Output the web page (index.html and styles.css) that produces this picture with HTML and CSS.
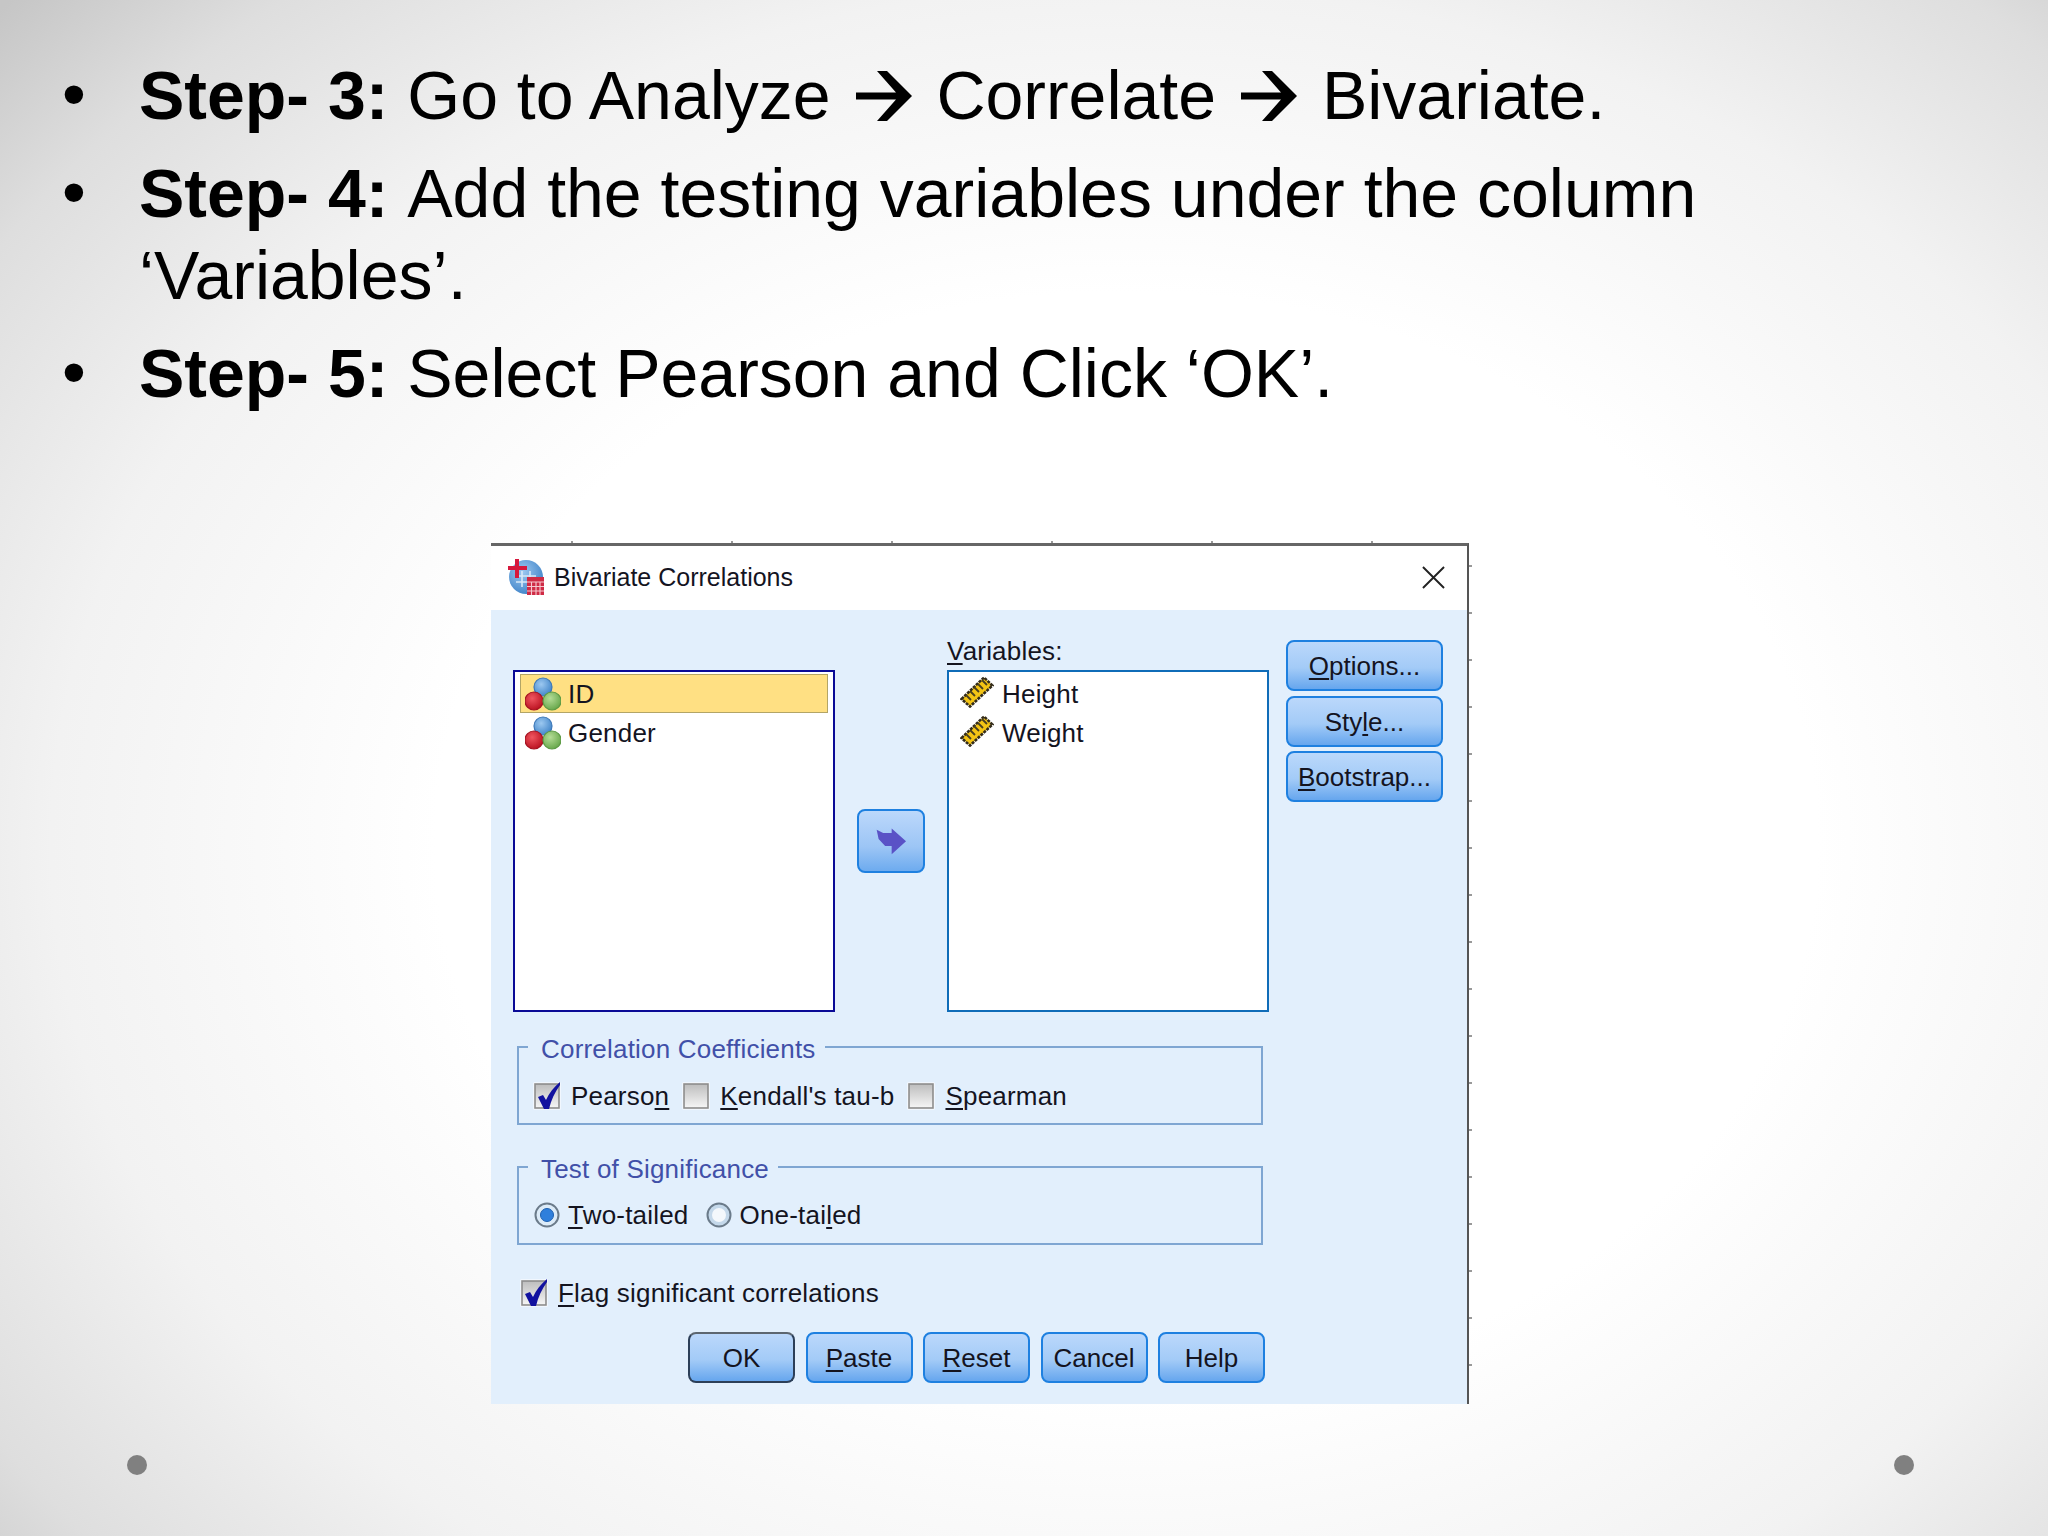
FILE: index.html
```html
<!DOCTYPE html>
<html lang="en">
<head>
<meta charset="utf-8">
<title>Bivariate Correlations</title>
<link rel="stylesheet" href="styles.css">
</head>
<body>
<svg class="defs" aria-hidden="true">
  <defs>
    <radialGradient id="gb" cx=".4" cy=".35" r=".7"><stop offset="0" stop-color="#9cc8f0"/><stop offset="1" stop-color="#3f83c8"/></radialGradient>
    <radialGradient id="gr" cx=".4" cy=".35" r=".7"><stop offset="0" stop-color="#f0555f"/><stop offset="1" stop-color="#b80f1e"/></radialGradient>
    <radialGradient id="gg" cx=".4" cy=".35" r=".7"><stop offset="0" stop-color="#b4dc96"/><stop offset="1" stop-color="#64a548"/></radialGradient>
    <linearGradient id="gc" x1="0" y1="0" x2="0" y2="1"><stop offset="0" stop-color="#bdbdbd"/><stop offset="1" stop-color="#f6f6f6"/></linearGradient>
    <symbol id="nominal" viewBox="0 0 36 34">
      <circle cx="18" cy="10" r="9" fill="url(#gb)" stroke="#3d78b8" stroke-width="1.2"/>
      <circle cx="9" cy="24" r="9" fill="url(#gr)" stroke="#a51220" stroke-width="1.2"/>
      <circle cx="27" cy="24" r="9" fill="url(#gg)" stroke="#5c9a44" stroke-width="1.2"/>
    </symbol>
    <symbol id="ruler" viewBox="0 0 34 32">
      <path d="M1.500 23 24 1.500l8.500 8L10 30.500z" fill="#f4c414" stroke="#332c1c" stroke-width="2.600" stroke-dasharray="3 1"/>
      <path d="M6 19l5 5M10 15l5 5M14 11l5 5M18 8l5 5M22 4l5 5" stroke="#4a4020" stroke-width="1.800" fill="none"/>
    </symbol>
    <symbol id="checked" viewBox="0 0 28 28">
      <rect x="1" y="1" width="26" height="26" fill="#fff" stroke="#fff"/>
      <rect x="2" y="2" width="24" height="24" fill="url(#gc)" stroke="#8d8d8d" stroke-width="1.6"/>
      <path d="M5 15l5-2 3 5C16 11 21 5 27 0v3C22 10 18 18 16 27h-5z" fill="#12129f"/>
    </symbol>
    <symbol id="unchecked" viewBox="0 0 28 28">
      <rect x="1" y="1" width="26" height="26" fill="#fff" stroke="#fff"/>
      <rect x="2" y="2" width="24" height="24" fill="url(#gc)" stroke="#8d8d8d" stroke-width="1.6"/>
    </symbol>
    <symbol id="radio-on" viewBox="0 0 26 26">
      <circle cx="13" cy="13" r="11.5" fill="#dcebf8" stroke="#6b7b8a" stroke-width="2"/>
      <circle cx="13" cy="13" r="6.5" fill="#2f7fdc" stroke="#1c5fb0" stroke-width="1"/>
    </symbol>
    <symbol id="radio-off" viewBox="0 0 26 26">
      <circle cx="13" cy="13" r="11.5" fill="#c4d8ea" stroke="#6b7b8a" stroke-width="2"/>
      <circle cx="13" cy="13" r="7" fill="#f4f8fc"/>
    </symbol>
    <symbol id="arrow" viewBox="0 0 56 50">
      <polygon points="21,0 31,0 56,25 31,50 21,50 40,28.500 0,28.500 0,21.500 40,21.500"/>
    </symbol>
  </defs>
</svg>
<main class="slide">
  <ul class="steps">
    <li class="step"><span class="bullet">•</span><p class="step-text"><b>Step- 3: </b>Go to Analyze <svg class="flow-arrow"><use href="#arrow"/></svg> Correlate <svg class="flow-arrow"><use href="#arrow"/></svg> Bivariate.</p></li>
    <li class="step"><span class="bullet">•</span><p class="step-text"><b>Step- 4: </b>Add the testing variables under the column ‘Variables’.</p></li>
    <li class="step"><span class="bullet">•</span><p class="step-text"><b>Step- 5: </b>Select Pearson and Click ‘OK’.</p></li>
  </ul>

  <section class="dialog">
    <header class="titlebar">
      <svg class="app-icon" viewBox="0 0 36 36" aria-hidden="true">
        <circle cx="18" cy="18" r="17" fill="url(#gb)"/>
        <path d="M8 17h20M8 23h14M14 12v16M22 12v10" stroke="#d8e9f8" stroke-width="1.6" fill="none"/>
        <path d="M7 0h4v7h8v4h-8v8H7v-8H0V7h7z" fill="#d6183c"/>
        <rect x="19" y="18" width="17" height="18" fill="#cf2b45"/>
        <path d="M19 23h17M19 27.500h17M19 32h17M23.500 23v13M28 23v13M32 23v13" stroke="#f6c8d0" stroke-width="1.100" fill="none"/>
      </svg>
      <h1 class="title">Bivariate Correlations</h1>
      <svg class="close" viewBox="0 0 24 24" aria-hidden="true"><path d="M1 1l22 22M23 1 1 23" stroke="#222" stroke-width="2" fill="none"/></svg>
    </header>

    <div class="body">
      <div class="top">
        <div class="col">
          <div class="list-label"></div>
          <ul class="list list-source">
            <li class="item selected"><svg class="nom"><use href="#nominal"/></svg>ID</li>
            <li class="item"><svg class="nom"><use href="#nominal"/></svg>Gender</li>
          </ul>
        </div>
        <div class="move">
          <button class="move-btn" aria-label="Move">
            <svg class="move-icon" viewBox="90 85 95 82" aria-hidden="true"><path d="M92 90l20 10h26V86l44 39-44 40v-25h-20L98 118z"/></svg>
          </button>
        </div>
        <div class="col">
          <div class="list-label"><u>V</u>ariables:</div>
          <ul class="list list-target">
            <li class="item"><svg class="rul"><use href="#ruler"/></svg>Height</li>
            <li class="item"><svg class="rul"><use href="#ruler"/></svg>Weight</li>
          </ul>
        </div>
        <div class="side">
          <button class="btn"><u>O</u>ptions...</button>
          <button class="btn">Sty<u>l</u>e...</button>
          <button class="btn"><u>B</u>ootstrap...</button>
        </div>
      </div>

      <fieldset class="group group-first">
        <legend class="legend">Correlation Coefficients</legend>
        <div class="opts">
          <span class="opt"><svg class="box"><use href="#checked"/></svg><span>Pearso<u>n</u></span></span>
          <span class="opt"><svg class="box"><use href="#unchecked"/></svg><span><u>K</u>endall's tau-b</span></span>
          <span class="opt"><svg class="box"><use href="#unchecked"/></svg><span><u>S</u>pearman</span></span>
        </div>
      </fieldset>

      <fieldset class="group group-second">
        <legend class="legend">Test of Significance</legend>
        <div class="opts opts-radio">
          <span class="opt"><svg class="dot"><use href="#radio-on"/></svg><span><u>T</u>wo-tailed</span></span>
          <span class="opt"><svg class="dot"><use href="#radio-off"/></svg><span>One-tai<u>l</u>ed</span></span>
        </div>
      </fieldset>

      <div class="flag opt"><svg class="box"><use href="#checked"/></svg><span><u>F</u>lag significant correlations</span></div>

      <div class="actions">
        <button class="btn btn-default">OK</button>
        <button class="btn"><u>P</u>aste</button>
        <button class="btn"><u>R</u>eset</button>
        <button class="btn">Cancel</button>
        <button class="btn">Help</button>
      </div>
    </div>
  </section>

  <span class="pin pin-left"></span>
  <span class="pin pin-right"></span>
</main>
</body>
</html>
```
FILE: styles.css
```css
* { box-sizing: border-box; }

html, body { margin: 0; padding: 0; }

.defs { position: absolute; width: 0; height: 0; }

.slide {
  position: relative;
  width: 2048px;
  height: 1536px;
  overflow: hidden;
  padding-top: 54px;
  font-family: "Liberation Sans", Arial, sans-serif;
  background: radial-gradient(ellipse 75% 80% at 55% 55%, #ffffff 0%, #ffffff 45%, #f2f2f2 70%, #dedede 88%, #c6c6c6 100%);
}

.steps { list-style: none; margin: 0; padding: 0 0 0 62px; }

.step { display: flex; margin-bottom: 16px; font-size: 68px; line-height: 82px; color: #000; }

.bullet { flex: 0 0 77px; margin-top: -2px; }

.step-text { margin: 0; width: 1680px; }

.flow-arrow { display: inline-block; width: 56px; height: 50px; margin: 0 6px; vertical-align: -2px; }

.dialog {
  position: relative;
  width: 978px;
  height: 861px;
  margin: 129px 0 0 491px;
  display: flex;
  flex-direction: column;
  border-top: 3px solid #666;
  border-right: 2px solid #555;
  font-size: 26px;
  letter-spacing: .2px;
  color: #14141f;
  background: #fff;
}

.dialog::before {
  content: "";
  position: absolute;
  top: -5px;
  left: 80px;
  right: 0;
  height: 2px;
  background: repeating-linear-gradient(90deg, #999 0 2px, transparent 2px 160px);
}

.dialog::after {
  content: "";
  position: absolute;
  top: 19px;
  bottom: 0;
  right: -5px;
  width: 3px;
  background: repeating-linear-gradient(180deg, #999 0 2px, transparent 2px 47px);
}

.titlebar { display: flex; align-items: center; height: 64px; flex: none; padding: 0 22px 2px 17px; background: #fff; }

.app-icon { width: 36px; height: 36px; flex: none; }

.title { margin: 0 0 0 10px; font-size: 25px; font-weight: 400; letter-spacing: 0; flex: 1; }

.close { width: 23px; height: 23px; flex: none; }

.body { flex: 1; padding: 30px 0 0 22px; background: #e2effc; }

.top { display: flex; }

.col { width: 322px; flex: none; }

.list-label { height: 30px; line-height: 22px; }

.list { list-style: none; margin: 0; padding: 2px 5px; height: 342px; background: #fff; }

.list-source { border: 2px solid #0a0a96; }

.list-target { border: 2px solid #0f6cb8; padding-left: 6px; }

.item { display: flex; align-items: center; height: 39px; padding: 2px 0 0 4px; border: 1.5px solid transparent; }

.selected { background: #ffe083; border-color: #b3a566; }

.nom { width: 36px; height: 34px; margin-right: 7px; margin-top: -2px; flex: none; }

.rul { width: 34px; height: 32px; margin-right: 8px; flex: none; margin-top: -5px; }

.move { width: 112px; flex: none; padding: 169px 0 0 22px; }

.move-btn {
  display: flex;
  align-items: center;
  justify-content: center;
  width: 68px;
  height: 64px;
  padding: 0;
  border: 2px solid #1e80e0;
  border-radius: 8px;
  background: linear-gradient(#bcd8fb, #9cc5f5 60%, #6dabef);
}

.move-icon { width: 31px; height: 27px; fill: #5a52c6; }

.side { display: flex; flex-direction: column; gap: 4.500px; width: 157px; margin-left: 17px; flex: none; }

.btn {
  height: 51px;
  padding: 2px 0 0;
  border: 2px solid #1e80e0;
  border-radius: 8px;
  font: inherit;
  letter-spacing: 0;
  color: #14141f;
  background: linear-gradient(#bbd8fb, #a3cbf7 55%, #66a6ee);
}

.btn-default { border-color: #2c3f58; border-top-color: #5c6670; }

.group {
  width: 746px;
  margin: 0 0 0 4px;
  padding: 0 0 12px 14px;
  border: 2px solid #7fa6d2;
  border-radius: 0;
  height: 93px;
}

.group-first { margin-top: 20px; }

.group-second { margin-top: 27px; }

.legend { margin-left: -5px; padding: 0 9px 0 13px; height: 30px; line-height: 34px; color: #4150a8; }

.opts { display: flex; gap: 13px; padding-top: 20px; }

.opts-radio { gap: 17px; padding-left: 1px; padding-top: 19px; }

.opts-radio .opt { gap: 8px; }

.opt { display: flex; align-items: center; gap: 10px; height: 28px; }

.box { width: 28px; height: 28px; flex: none; }

.dot { width: 26px; height: 26px; flex: none; }

.flag { margin: 34px 0 0 7px; }

.actions { display: flex; gap: 10.500px; margin: 25px 0 0 175px; }

.actions .btn { width: 107px; }

u { text-decoration-thickness: 2px; text-underline-offset: 3px; }

.pin { position: absolute; top: 1455px; width: 20px; height: 20px; border-radius: 50%; background: #808080; }

.pin-left { left: 127px; }

.pin-right { left: 1894px; }
```
